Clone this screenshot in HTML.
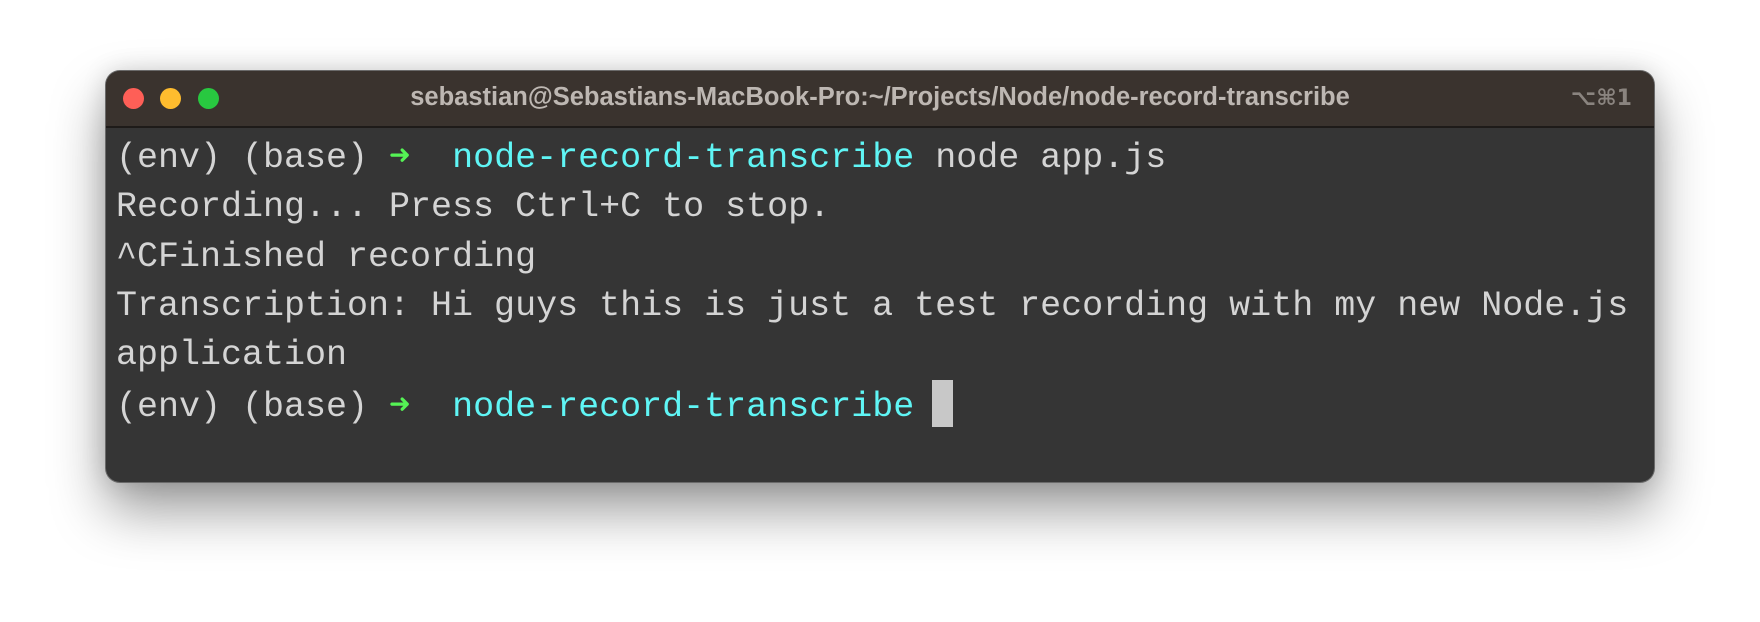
<!DOCTYPE html>
<html><head><meta charset="utf-8"><style>
html,body{margin:0;padding:0;width:1760px;height:622px;background:#fff;overflow:hidden;}
.win{position:absolute;left:106px;top:71px;width:1548px;height:411px;border-radius:14px;background:#353535;
box-shadow:0 0 0 1px #6a6a6a,0 28px 55px rgba(0,0,0,.4),0 0 25px rgba(0,0,0,.15);overflow:hidden;}
.tb{position:absolute;left:0;top:0;right:0;height:55px;background:#3a332e;border-bottom:2px solid #1e1b19;}
.dot{position:absolute;top:17px;width:21px;height:21px;border-radius:50%;}
.title{position:absolute;left:0;right:0;top:12px;text-align:center;font:bold 25.5px "Liberation Sans",sans-serif;color:#bdb7b2;}
.sc{position:absolute;right:22px;top:15px;font:bold 22px "DejaVu Sans","Liberation Sans",sans-serif;color:#8a847f;}
.term{position:absolute;left:10px;top:63px;font:35px/49.3px "Liberation Mono",monospace;color:#d4d4d4;white-space:pre;}
.g{color:#55f255;font-weight:bold}.c{color:#5ff5f5}
.cur{display:inline-block;width:21px;height:47px;background:#c8c8c8;vertical-align:-11px;margin-left:-3px;}
</style></head><body>
<div class="win">
<div class="tb">
<div class="dot" style="left:17px;background:#fe5f57"></div>
<div class="dot" style="left:54px;background:#febc2e"></div>
<div class="dot" style="left:92px;background:#28c840"></div>
<div class="title">sebastian@Sebastians-MacBook-Pro:~/Projects/Node/node-record-transcribe</div>
<div class="sc">⌥⌘1</div>
</div>
<div class="term">(env) (base) <span class="g">➜</span>  <span class="c">node-record-transcribe</span> node app.js
Recording... Press Ctrl+C to stop.
^CFinished recording
Transcription: Hi guys this is just a test recording with my new Node.js
application
(env) (base) <span class="g">➜</span>  <span class="c">node-record-transcribe</span> <span class="cur"></span></div>
</div>
</body></html>
